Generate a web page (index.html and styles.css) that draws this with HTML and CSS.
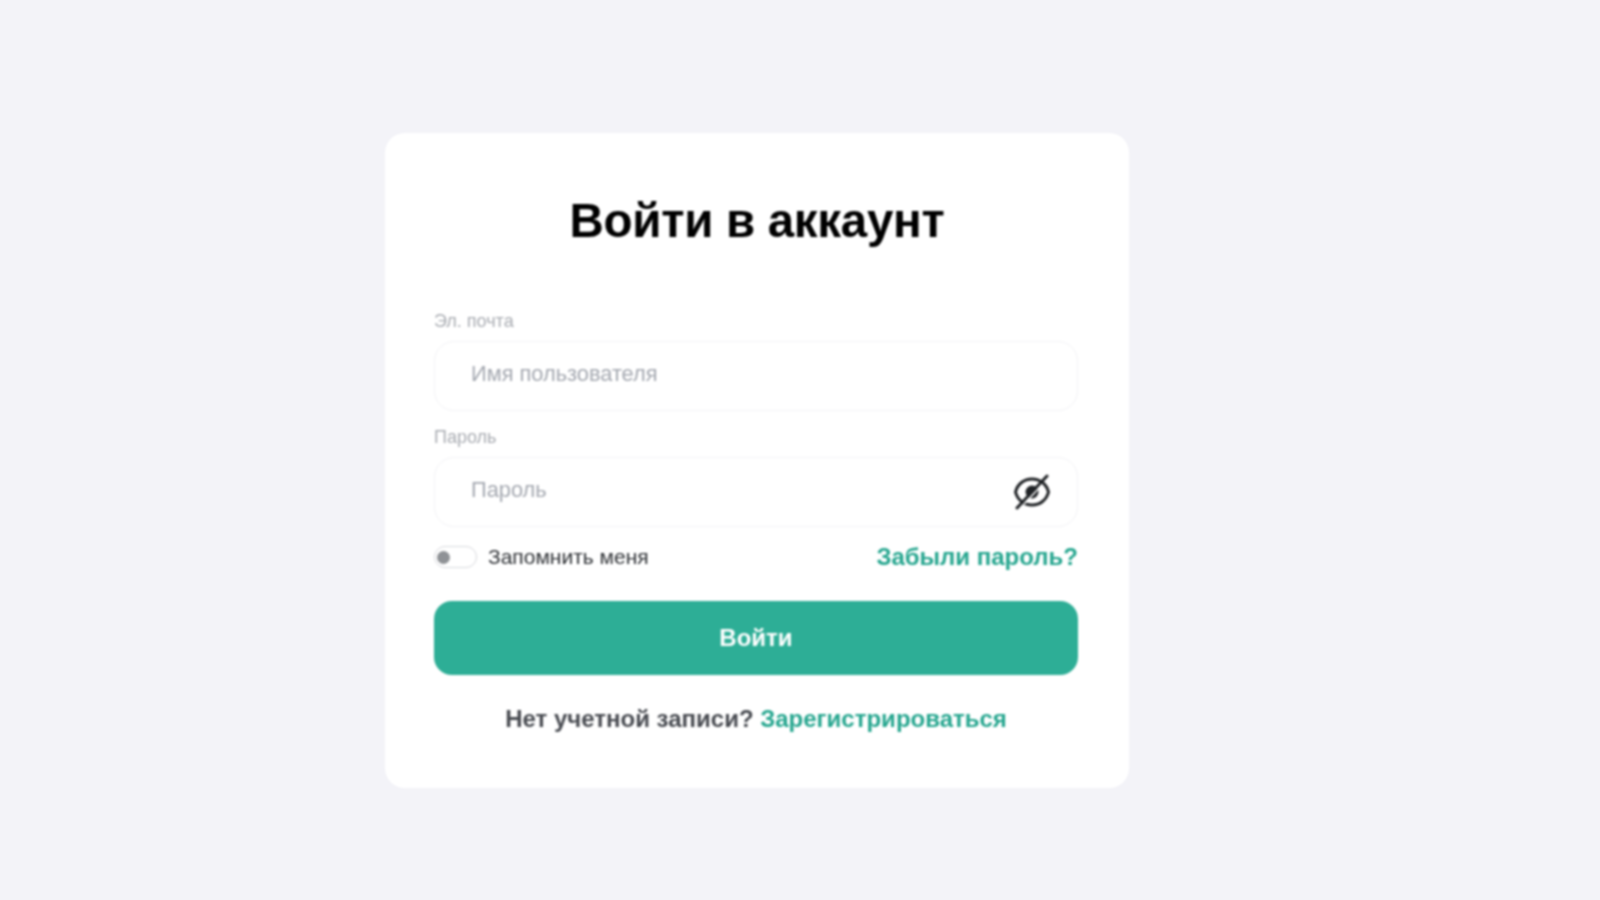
FILE: index.html
```html
<!DOCTYPE html>
<html lang="ru">

<head>
  <meta charset="UTF-8">
  <meta name="viewport" content="width=device-width, initial-scale=1.0">
  <title>Войти в аккаунт</title>
  <link rel="stylesheet" href="styles.css">
</head>

<body>
  <div class="form-container">
    <h2>Войти в аккаунт</h2>
    <div class="input-group">
      <label for="login-email">Эл. почта</label>
      <div class="input-box">
        <input type="text" id="login-email" placeholder="Имя пользователя">
      </div>
    </div>
    <div class="input-group">
      <label for="login-password">Пароль</label>
      <div class="input-box">
        <input type="password" id="login-password" placeholder="Пароль">
        <svg class="eye-icon" viewBox="0 0 36 36" fill="none" stroke="#1f2225" stroke-width="3" stroke-linecap="round">
          <path d="M1.500 18C3.500 10 10 5 18 5s14.500 5 16.500 13c-2 8-8.500 13-16.500 13S3.500 26 1.500 18z" />
          <circle cx="18" cy="18" r="6.500" fill="#1f2225" stroke="none" />
          <path d="M33 2 3 34" />
          <path d="M28 11 10 30" stroke="#fff" stroke-width="1.500" />
        </svg>
      </div>
    </div>
    <div class="options-row">
      <label class="remember">
        <span class="switch"><span class="switch-dot"></span></span>
        Запомнить меня
      </label>
      <a href="#" class="forgot-link">Забыли пароль?</a>
    </div>
    <button id="login-button">Войти</button>
    <div class="switch-link">
      Нет учетной записи? <a href="#">Зарегистрироваться</a>
    </div>
  </div>
</body>

</html>
```

FILE: styles.css
```css
/* page */
body {
  font-family: "Liberation Sans", Arial, sans-serif;
  background-color: #f3f3f8;
  margin: 0;
  height: 900px;
  overflow: hidden;
}

/* card */
.form-container {
  background-color: #fff;
  box-sizing: border-box;
  width: 744px;
  height: 655px;
  margin: 133px 0 0 385px;
  padding: 60px 51px 0 49px;
  border-radius: 20px;
  filter: blur(0.8px);
}

.form-container h2 {
  margin: 0 -2px 62px 0;
  font-size: 47.5px;
  line-height: 56px;
  font-weight: 700;
  letter-spacing: -0.3px;
  text-align: center;
  color: #000;
}

/* inputs */
.input-group {
  margin-bottom: 16px;
}

.input-group label {
  display: block;
  height: 30px;
  font-size: 18px;
  line-height: 21px;
  color: #a9acb2;
}

.input-box {
  display: flex;
  align-items: center;
  box-sizing: border-box;
  height: 70px;
  padding: 0 27px 0 36px;
  border: 1px solid #f3f3f6;
  border-radius: 20px;
}

.input-box input {
  flex: 1;
  min-width: 0;
  padding: 0 0 4px;
  border: none;
  outline: none;
  background: none;
  font-family: inherit;
  font-size: 21.800px;
  color: #333;
}

.input-box input::placeholder {
  color: #a4a8b0;
}

.eye-icon {
  width: 36px;
  height: 36px;
  flex-shrink: 0;
}

/* remember + forgot */
.options-row {
  display: flex;
  justify-content: space-between;
  align-items: center;
  height: 28px;
  margin-top: 15px;
}

.remember {
  display: flex;
  align-items: center;
  gap: 11px;
  font-size: 21px;
  color: #2f3236;
}

.switch {
  display: flex;
  align-items: center;
  box-sizing: border-box;
  width: 43px;
  height: 22px;
  padding-left: 2px;
  border: 1px solid #d9dade;
  border-radius: 11px;
}

.switch-dot {
  width: 13px;
  height: 13px;
  border-radius: 50%;
  background-color: #8f9296;
}

.forgot-link {
  font-size: 24px;
  font-weight: 700;
  color: #26a68f;
  text-decoration: none;
}

/* button */
button {
  display: block;
  width: 100%;
  height: 74px;
  margin-top: 30px;
  padding: 0;
  background-color: #2dae96;
  color: #fff;
  border: none;
  border-radius: 18px;
  font-family: inherit;
  font-size: 24px;
  font-weight: 700;
  cursor: pointer;
}

/* register link */
.switch-link {
  margin-top: 28px;
  font-size: 24px;
  font-weight: 700;
  line-height: 32px;
  text-align: center;
  color: #484b51;
}

.switch-link a {
  color: #26a68f;
  text-decoration: none;
}
```
